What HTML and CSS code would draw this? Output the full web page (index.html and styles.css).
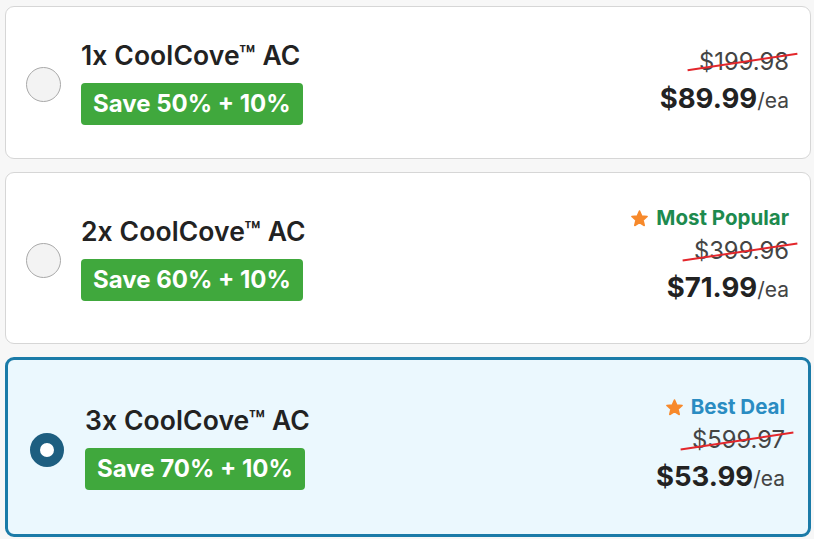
FILE: index.html
```html
<!DOCTYPE html>
<html lang="en">
  <head>
    <meta charset="UTF-8" />
    <meta name="viewport" content="width=device-width, initial-scale=1.0" />
    <title>CoolCove AC bundles</title>
    <link rel="stylesheet" href="styles.css">
  </head>
  <body>
    <div class="bundles">
      <label class="bundle">
        <span class="radio"></span>
        <div class="bundle-info">
          <div class="bundle-name">1x CoolCove™ AC</div>
          <span class="save">Save 50% + 10%</span>
        </div>
        <div class="bundle-price">
          <div class="was">$199.98</div>
          <div class="now"><b>$89.99</b>/ea</div>
        </div>
      </label>

      <label class="bundle">
        <span class="radio"></span>
        <div class="bundle-info">
          <div class="bundle-name">2x CoolCove™ AC</div>
          <span class="save">Save 60% + 10%</span>
        </div>
        <div class="bundle-price">
          <div class="tag tag-popular">
            <svg class="star" viewBox="0 0 24 24"><polygon points="12,2.5 14.8,8.9 21.6,9.5 16.4,14 18,20.8 12,17.2 6,20.8 7.6,14 2.4,9.5 9.2,8.9" /></svg>
            Most Popular
          </div>
          <div class="was">$399.96</div>
          <div class="now"><b>$71.99</b>/ea</div>
        </div>
      </label>

      <label class="bundle selected">
        <span class="radio"></span>
        <div class="bundle-info">
          <div class="bundle-name">3x CoolCove™ AC</div>
          <span class="save">Save 70% + 10%</span>
        </div>
        <div class="bundle-price">
          <div class="tag tag-deal">
            <svg class="star" viewBox="0 0 24 24"><polygon points="12,2.5 14.8,8.9 21.6,9.5 16.4,14 18,20.8 12,17.2 6,20.8 7.6,14 2.4,9.5 9.2,8.9" /></svg>
            Best Deal
          </div>
          <div class="was">$599.97</div>
          <div class="now"><b>$53.99</b>/ea</div>
        </div>
      </label>
    </div>
  </body>
</html>
```

FILE: styles.css
```css
body {
  font-family: Inter, "Liberation Sans", sans-serif;
  background-color: #f7f7f7;
  margin: 0;
  padding: 6px 3px 0 5px;
  color: #222;
}
.bundles {
  display: flex;
  flex-direction: column;
  gap: 13px;
}
.bundle {
  display: flex;
  align-items: center;
  padding: 33px 21px 33px 20px;
  background-color: #fff;
  border: 1px solid #d6d6d6;
  border-radius: 9px;
  cursor: pointer;
}
.bundle.selected {
  background-color: #ebf8fe;
  border: 3px solid #1b7ba8;
  padding: 35px 23px 35px 21px;
}
.radio {
  flex: none;
  width: 33px;
  height: 33px;
  border: 1.5px solid #a9a9a9;
  border-radius: 50%;
  background-color: #f3f3f3;
  margin-right: 20px;
  margin-top: 4px;
}
.selected .radio {
  width: 14px;
  height: 14px;
  border: 10px solid #1d5e80;
  background-color: #fff;
  margin-left: 1px;
  margin-right: 21px;
  margin-top: 6px;
}
.bundle-info {
  flex: 1;
}
.bundle-name {
  font-size: 26.5px;
  font-weight: 600;
  line-height: 31px;
  letter-spacing: 0.1px;
  margin-bottom: 12px;
}
.save {
  display: inline-block;
  background-color: #40a83d;
  color: #fff;
  font-size: 24px;
  font-weight: 700;
  line-height: 42px;
  padding: 0 12px;
  border-radius: 4px;
}
.bundle-price {
  text-align: right;
}
.tag {
  display: flex;
  justify-content: flex-end;
  align-items: center;
  gap: 7px;
  font-size: 20.5px;
  font-weight: 700;
  line-height: 24px;
  margin-bottom: 4px;
}
.tag-popular {
  color: #1d8a4e;
}
.tag-deal {
  color: #2a8cc2;
}
.star {
  width: 19px;
  height: 19px;
  fill: #f7892b;
  stroke: #f7892b;
  stroke-width: 2;
  stroke-linejoin: round;
}
.was {
  position: relative;
  display: inline-block;
  font-size: 23.8px;
  line-height: 33px;
  color: #444;
}
.was::after {
  content: "";
  position: absolute;
  left: -12px;
  right: -9px;
  top: 50%;
  height: 2px;
  background-color: #e3262b;
  transform: rotate(-8.5deg);
}
.now {
  font-size: 21px;
  color: #444;
  line-height: 41px;
}
.now b {
  font-size: 27.5px;
  font-weight: 700;
  color: #222;
}
```
